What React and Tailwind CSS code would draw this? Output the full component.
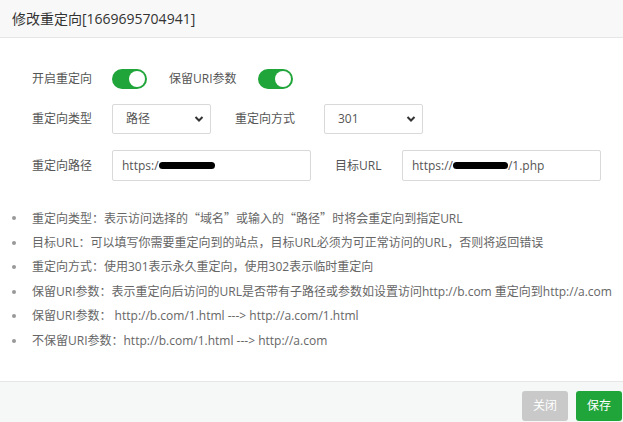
import React from 'react';

const font = { fontFamily: '"Open Sans", "Noto Sans CJK SC", sans-serif' };
const cjk = { fontFamily: '"Noto Sans CJK SC", sans-serif' };

function Toggle() {
  return (
    <div className="relative w-[35px] h-[20px] rounded-full bg-[#20a53a] shrink-0">
      <div className="absolute right-[2px] top-[2px] w-[16px] h-[16px] rounded-full bg-white" />
    </div>
  );
}

function Select({ value, width }) {
  return (
    <div
      className={`flex items-center justify-between h-[30px] border border-[#d9d9d9] rounded-[2px] bg-white pl-[13px] pr-[6px] text-[12px] text-[#555] ${width}`}
    >
      <span>{value}</span>
      <svg width="10" height="8" viewBox="0 0 10 8">
        <polyline points="1.5,2 5,5.5 8.5,2" fill="none" stroke="#333" strokeWidth="2" />
      </svg>
    </div>
  );
}

function Blob({ w }) {
  return <span className={`inline-block h-[7px] bg-black rounded-full ${w}`} />;
}

// full-width quotes like the reference font
function Q({ children }) {
  return <span style={cjk}>{children}</span>;
}

export default function App() {
  const tips = [
    <>重定向类型：表示访问选择的<Q>“</Q>域名<Q>”</Q>或输入的<Q>“</Q>路径<Q>”</Q>时将会重定向到指定URL</>,
    '目标URL：可以填写你需要重定向到的站点，目标URL必须为可正常访问的URL，否则将返回错误',
    '重定向方式：使用301表示永久重定向，使用302表示临时重定向',
    '保留URI参数：表示重定向后访问的URL是否带有子路径或参数如设置访问http://b.com 重定向到http://a.com',
    '保留URI参数： http://b.com/1.html ---> http://a.com/1.html',
    '不保留URI参数：http://b.com/1.html ---> http://a.com',
  ];

  return (
    <div className="w-full h-screen overflow-hidden bg-white flex flex-col" style={font}>
      {/* title bar */}
      <div className="h-[38px] shrink-0 bg-[#f8f8f8] border-b border-[#e6e6e6] px-3 flex items-center text-[14px] text-[#333]">
        修改重定向[1669695704941]
      </div>

      {/* body */}
      <div className="h-[343px] shrink-0 pt-[26px]">
        <div className="flex items-center h-[30px] pl-[32px] text-[12px] text-[#555]">
          <span className="w-[80px]">开启重定向</span>
          <Toggle />
          <span className="ml-[22px] w-[89px]">保留URI参数</span>
          <Toggle />
        </div>

        <div className="flex items-center mt-[10px] pl-[32px] text-[12px] text-[#555]">
          <span className="w-[80px]">重定向类型</span>
          <Select value="路径" width="w-[99px]" />
          <span className="ml-[24px] w-[89px]">重定向方式</span>
          <Select value="301" width="w-[99px]" />
        </div>

        <div className="flex items-center mt-[16px] pl-[32px] text-[12px] text-[#555]">
          <span className="w-[80px]">重定向路径</span>
          <div className="w-[199px] h-[31px] border border-[#d9d9d9] rounded-[2px] pl-[9px] flex items-center">
            <span>https:/</span>
            <Blob w="w-[56px]" />
          </div>
          <span className="ml-[24px] w-[67px]">目标URL</span>
          <div className="w-[199px] h-[31px] border border-[#d9d9d9] rounded-[2px] pl-[9px] flex items-center">
            <span>https://</span>
            <Blob w="w-[55px]" />
            <span>/1.php</span>
          </div>
        </div>

        <ul className="mt-[25px] text-[12px] text-[#666]">
          {tips.map((t, i) => (
            <li key={i} className="flex items-center h-[24.5px] whitespace-nowrap">
              <span className="w-[4px] h-[4px] rounded-full bg-[#999] ml-[12px] mr-[16px] shrink-0" />
              <span>{t}</span>
            </li>
          ))}
        </ul>
      </div>

      {/* footer */}
      <div className="flex-1 bg-[#f6f8f8] border-t border-[#e6e6e6] flex justify-end gap-[8px] pt-[9px] pr-[1px]">
        <button className="w-[46px] h-[30px] rounded-[3px] bg-[#c9c9c9] text-white text-[12px]">关闭</button>
        <button className="w-[46px] h-[30px] rounded-[3px] bg-[#20a53a] text-white text-[12px]">保存</button>
      </div>
    </div>
  );
}
